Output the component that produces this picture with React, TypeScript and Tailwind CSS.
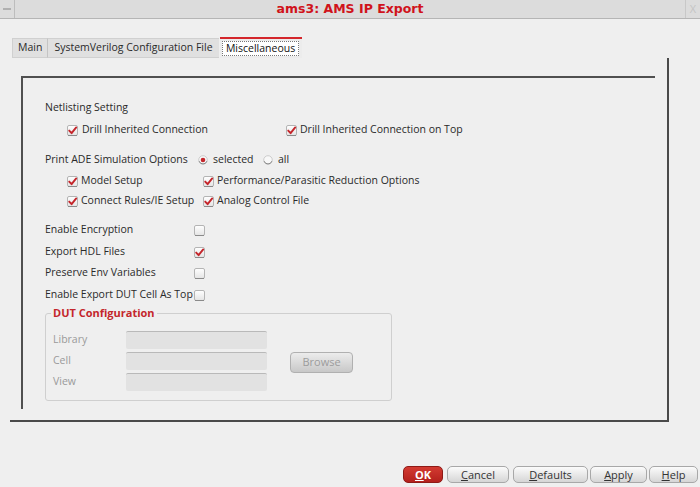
import React from "react";

function Check({ checked }: { checked: boolean }) {
  return (
    <svg width="11" height="11" viewBox="0 0 11 11" className="shrink-0">
      <defs>
        <linearGradient id="cbg" x1="0" y1="0" x2="0" y2="1">
          <stop offset="0" stopColor="#ffffff" />
          <stop offset="1" stopColor="#e4e4e4" />
        </linearGradient>
      </defs>
      <rect x="0.5" y="0.5" width="10" height="10" rx="1.5" fill="url(#cbg)" stroke="#b4b4b4" />
      <line x1="1" y1="10.5" x2="10" y2="10.5" stroke="#8a8a8a" />
      {checked && (
        <path d="M2.2 5.6 L4.6 8.2 L9.2 2.4" fill="none" stroke="#c4262b" strokeWidth="1.9" strokeLinecap="round" strokeLinejoin="round" />
      )}
    </svg>
  );
}

function Radio({ on }: { on: boolean }) {
  return (
    <svg width="10" height="10" viewBox="0 0 10 10" className="shrink-0">
      <circle cx="5" cy="5" r="4.3" fill="#f8f8f8" stroke="#c2c2c2" strokeWidth="0.8" />
      <path d="M1.2 6.2 A4 4 0 0 0 8.8 6.2" fill="none" stroke="#8a8a8a" strokeWidth="1" />
      {on && <circle cx="5" cy="5" r="2.3" fill="#c4262b" />}
    </svg>
  );
}

function Btn({ u, rest, w }: { u: string; rest: string; w: string }) {
  return (
    <button
      className={`${w} h-[17px] rounded-[5px] border border-[#a8a8a8] bg-gradient-to-b from-[#fbfbfb] to-[#d6d6d6] text-[11px] text-[#333] flex items-center justify-center leading-none`}
    >
      <span>
        <span className="underline">{u}</span>
        {rest}
      </span>
    </button>
  );
}

export default function App() {
  return (
    <div
      className="w-[700px] h-[487px] bg-[#efefef] flex flex-col text-[#2a2a2a] overflow-hidden"
      style={{ fontFamily: '"Open Sans", "Noto Sans", sans-serif' }}
    >
      {/* title bar */}
      <div className="h-[19px] bg-[#dcdcdc] border-b border-[#b5b5b5] flex items-stretch">
        <div className="w-[15px] border-r border-[#bdbdbd] flex items-center justify-center">
          <div className="w-[8px] h-[2px] bg-[#b0b0b0]" />
        </div>
        <div
          className="flex-1 flex items-center justify-center text-[12.5px] font-bold text-[#d0131b]"
          style={{ fontFamily: '"DejaVu Sans", sans-serif' }}
        >
          ams3: AMS IP Export
        </div>
        <div className="w-[15px] border-l border-[#c8c8c8] flex items-center justify-center text-[11px] text-[#c4c4c4]">
          X
        </div>
      </div>

      {/* tabs */}
      <div className="pt-[18px] pl-[12px] flex items-end text-[10.5px]">
        <div className="h-[20px] px-[5px] bg-[#e0e0e0] border border-[#d0d0d0] border-r-[#c4c4c4] flex items-center">Main</div>
        <div className="h-[20px] px-[6px] bg-[#e0e0e0] border-y border-[#d0d0d0] flex items-center">SystemVerilog Configuration File</div>
        <div className="h-[21px] w-[82px] ml-[1px] border-t-2 border-[#d4262b] bg-[#ececec] flex items-center justify-center">
          <div className="border border-dotted border-[#777] bg-white px-[3px] h-[15px] flex items-center text-[#111]">Miscellaneous</div>
        </div>
      </div>

      {/* panel */}
      <div className="ml-[10px] w-[659px] h-[364px] border-r-2 border-b-2 border-[#4a4a4a]">
        <div className="ml-[11px] mt-[18px] w-[634px] h-[333px] border-t-2 border-l-2 border-[#505050] pl-[22px] pt-[21px] text-[10.5px] flex flex-col">
          <div className="h-[18px] flex items-center">Netlisting Setting</div>

          <div className="h-[18px] mt-[4px] flex items-center">
            <div className="w-[241px] pl-[22px] flex items-center gap-[4px]">
              <Check checked />
              <span>Drill Inherited Connection</span>
            </div>
            <div className="flex items-center gap-[3px]">
              <Check checked />
              <span>Drill Inherited Connection on Top</span>
            </div>
          </div>

          <div className="h-[18px] mt-[12px] flex items-center">
            <span className="w-[153px]">Print ADE Simulation Options</span>
            <Radio on />
            <span className="ml-[5px] w-[50px]">selected</span>
            <Radio on={false} />
            <span className="ml-[5px]">all</span>
          </div>

          <div className="h-[18px] mt-[3px] flex items-center">
            <div className="w-[158px] pl-[22px] flex items-center gap-[3px]">
              <Check checked />
              <span>Model Setup</span>
            </div>
            <div className="flex items-center gap-[3px]">
              <Check checked />
              <span>Performance/Parasitic Reduction Options</span>
            </div>
          </div>

          <div className="h-[18px] mt-[2px] flex items-center">
            <div className="w-[158px] pl-[22px] flex items-center gap-[3px]">
              <Check checked />
              <span className="whitespace-nowrap">Connect Rules/IE Setup</span>
            </div>
            <div className="flex items-center gap-[3px]">
              <Check checked />
              <span>Analog Control File</span>
            </div>
          </div>

          {[
            ["Enable Encryption", false, "mt-[11px]"],
            ["Export HDL Files", true, "mt-[4px]"],
            ["Preserve Env Variables", false, "mt-[3px]"],
            ["Enable Export DUT Cell As Top", false, "mt-[4px]"],
          ].map(([label, c, m]) => (
            <div key={label as string} className={`h-[18px] ${m} flex items-center`}>
              <span className="w-[149px] whitespace-nowrap overflow-hidden">{label as string}</span>
              <Check checked={c as boolean} />
            </div>
          ))}

          {/* DUT Configuration */}
          <div className="relative mt-[9px] w-[347px] h-[88px] border border-[#cfcfcf] rounded-[3px] pt-[17px] pl-[7px]">
            <div className="absolute -top-[8px] left-[5px] px-[2px] bg-[#efefef] text-[11px] font-bold text-[#c4262b] leading-[14px]">
              DUT Configuration
            </div>
            <div className="flex items-center">
              <div className="flex flex-col gap-[3px]">
                {["Library", "Cell", "View"].map((l) => (
                  <div key={l} className="flex items-center h-[18px]">
                    <span className="w-[73px] text-[#9a9a9a]">{l}</span>
                    <div className="w-[141px] h-[18px] bg-[#e2e2e2] border-t border-[#b9b9b9] rounded-[2px]" />
                  </div>
                ))}
              </div>
              <div className="ml-[23px] mt-[2px] w-[63px] h-[21px] rounded-[4px] border border-[#b0b0b0] bg-gradient-to-b from-[#ececec] to-[#c8c8c8] flex items-center justify-center text-[11px] text-[#9c9c9c]">
                Browse
              </div>
            </div>
          </div>
        </div>
      </div>

      {/* buttons */}
      <div className="mt-[44px] flex justify-end pr-[2px]">
        <button className="w-[40px] h-[17px] rounded-[5px] bg-gradient-to-b from-[#d33a31] to-[#b4201c] border border-[#8e1a16] text-white text-[11px] font-bold flex items-center justify-center leading-none">
          <span>
            <span className="underline">O</span>K
          </span>
        </button>
        <div className="ml-[4px]"><Btn u="C" rest="ancel" w="w-[62px]" /></div>
        <div className="ml-[4px]"><Btn u="D" rest="efaults" w="w-[75px]" /></div>
        <div className="ml-[2px]"><Btn u="A" rest="pply" w="w-[57px]" /></div>
        <div className="ml-[2px]"><Btn u="H" rest="elp" w="w-[49px]" /></div>
      </div>
    </div>
  );
}
